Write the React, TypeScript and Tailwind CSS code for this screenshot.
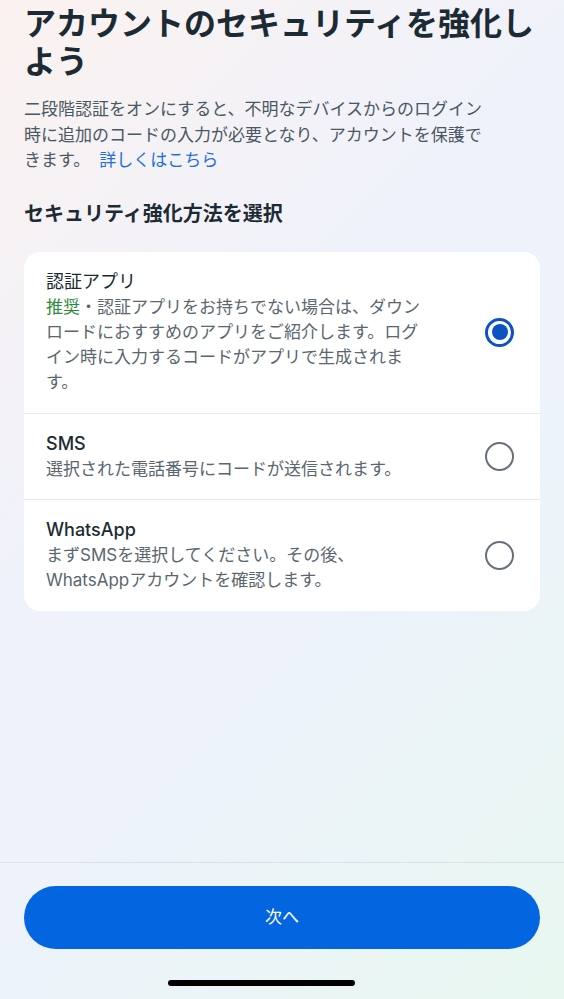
import React from "react";

const FONT = '"Inter", "Noto Sans CJK JP", sans-serif';

function Radio({ selected }: { selected?: boolean }) {
  if (selected) {
    return (
      <div className="flex h-[29px] w-[29px] shrink-0 items-center justify-center rounded-full border-[3px] border-[#0a53c1]">
        <div className="h-[16px] w-[16px] rounded-full bg-[#0a53c1]" />
      </div>
    );
  }
  return <div className="h-[29px] w-[29px] shrink-0 rounded-full border-[2.5px] border-[#67707a]" />;
}

function Row({
  title,
  latin,
  children,
  selected,
  last,
}: {
  title: string;
  latin?: boolean;
  children: React.ReactNode;
  selected?: boolean;
  last?: boolean;
}) {
  return (
    <div className={`flex items-center py-[17px] pl-[22px] pr-[26px] ${last ? "" : "border-b border-[#e6e9ee]"}`}>
      <div className="w-[384px]">
        <div className={`text-[18px] leading-[26px] text-[#1c2b33] ${latin ? "font-medium" : "font-normal"}`}>{title}</div>
        <div className="text-[17px] leading-[25.3px] text-[#5a6670]">{children}</div>
      </div>
      <div className="ml-auto">
        <Radio selected={selected} />
      </div>
    </div>
  );
}

export default function App() {
  return (
    <div
      className="flex h-[999px] w-full flex-col overflow-hidden bg-[linear-gradient(135deg,#fbf2f0_0%,#eff2fb_40%,#edf2fb_60%,#e8f7f0_100%)]"
      style={{ fontFamily: FONT }}
    >
      <div className="flex flex-col px-6 pt-[5px]">
        <h1 className="text-[32px] font-bold leading-[38px] text-[#1c2b33]">
          アカウントのセキュリティを強化しよう
        </h1>
        <p className="mt-4 w-[468px] text-[17px] leading-[25.5px] text-[#4a5863]">
          二段階認証をオンにすると、不明なデバイスからのログイン時に追加のコードの入力が必要となり、アカウントを保護できます。
          <span className="ml-[9px] text-[#1a70dc]">詳しくはこちら</span>
        </p>
        <h2 className="mt-[26px] text-[20px] font-bold leading-[28px] text-[#1c2b33]">
          セキュリティ強化方法を選択
        </h2>
        <div className="mt-6 overflow-hidden rounded-2xl bg-white">
          <Row title="認証アプリ" selected>
            <span className="text-[#2b8a3a]">推奨</span>・認証アプリをお持ちでない場合は、ダウンロードにおすすめのアプリをご紹介します。ログイン時に入力するコードがアプリで生成されます。
          </Row>
          <Row title="SMS" latin>
            選択された電話番号にコードが送信されます。
          </Row>
          <Row title="WhatsApp" latin last>
            まずSMSを選択してください。その後、
            <br />
            WhatsAppアカウントを確認します。
          </Row>
        </div>
      </div>
      <div className="flex-1" />
      <div className="flex flex-col border-t border-[#dde3ea] px-6 pt-[23px] pb-[13px]">
        <button className="flex h-[63px] w-full items-center justify-center rounded-full bg-[#0366e0] text-[17px] text-white">
          次へ
        </button>
        <div className="mt-[31px] ml-[144px] h-[6px] w-[187px] rounded-full bg-black" />
      </div>
    </div>
  );
}
